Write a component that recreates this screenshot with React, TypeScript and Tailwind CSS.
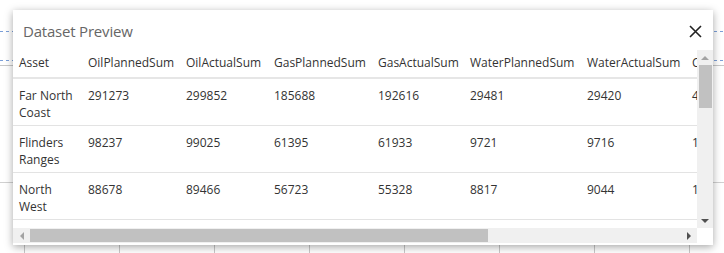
import React from "react";

const columns = [
  { key: "asset", label: "Asset", w: "w-[69px]" },
  { key: "oilP", label: "OilPlannedSum", w: "w-[98px]" },
  { key: "oilA", label: "OilActualSum", w: "w-[88px]" },
  { key: "gasP", label: "GasPlannedSum", w: "w-[104px]" },
  { key: "gasA", label: "GasActualSum", w: "w-[92px]" },
  { key: "watP", label: "WaterPlannedSum", w: "w-[117px]" },
  { key: "watA", label: "WaterActualSum", w: "w-[105px]" },
  { key: "condP", label: "CondensatePlannedSum", w: "w-[150px]" },
];

const rows = [
  ["Far North Coast", "291273", "299852", "185688", "192616", "29481", "29420", "41230"],
  ["Flinders Ranges", "98237", "99025", "61395", "61933", "9721", "9716", "13655"],
  ["North West", "88678", "89466", "56723", "55328", "8817", "9044", "12480"],
  ["South East", "77120", "76534", "48210", "47980", "7654", "7702", "10922"],
];

const gridX = [24, 119, 214, 309, 404, 499, 594, 689];

const App = () => {
  return (
    <div className="relative w-[724px] h-[253px] bg-white overflow-hidden font-['Open_Sans','Noto_Sans',sans-serif]">
      {/* chart behind the dialog */}
      <svg className="absolute inset-0" width="724" height="253">
        <line x1="0" y1="31.5" x2="724" y2="31.5" stroke="#7b9fd8" strokeDasharray="3 3" />
        <line x1="0" y1="60.5" x2="724" y2="60.5" stroke="#7b9fd8" strokeDasharray="3 3" />
        <line x1="0" y1="65.5" x2="724" y2="65.5" stroke="#c8c8c8" />
        <line x1="0" y1="182.5" x2="724" y2="182.5" stroke="#d0d0d0" />
        {gridX.map((x) => (
          <line key={x} x1={x + 0.5} y1="240" x2={x + 0.5} y2="253" stroke="#c8c8c8" />
        ))}
      </svg>

      {/* dialog */}
      <div className="absolute left-[13px] top-[10px] w-[700px] h-[235px] bg-white shadow-[0_2px_8px_rgba(0,0,0,0.35)] flex flex-col">
        <div className="h-[38px] flex items-center justify-between pl-[10px] pr-[11px] pt-[4px]">
          <span className="text-[15px] text-[#666666] tracking-[-0.2px]">Dataset Preview</span>
          <svg width="13" height="13" viewBox="0 0 13 13">
            <path d="M1 1 L12 12 M12 1 L1 12" stroke="#222" strokeWidth="1.6" />
          </svg>
        </div>

        <div className="flex flex-1">
          <div className="flex flex-col w-[684px]">
            <div className="h-[180px] overflow-hidden text-[12px] text-[#333333]">
              <div className="flex h-[31px] border-b-2 border-[#e6e6e6] w-max">
                {columns.map((c) => (
                  <div key={c.key} className={`${c.w} shrink-0 px-[6px] flex items-center whitespace-nowrap`}>
                    {c.label}
                  </div>
                ))}
              </div>
              {rows.map((r, i) => (
                <div key={i} className="flex h-[47px] border-b border-[#e3e3e3] w-max">
                  {r.map((v, j) => (
                    <div key={j} className={`${columns[j].w} shrink-0 px-[6px] pt-[8px] leading-[17px]`}>
                      {v}
                    </div>
                  ))}
                </div>
              ))}
            </div>
            {/* horizontal scrollbar */}
            <div className="h-[15px] bg-[#f0f0f0] flex items-center">
              <div className="w-[17px] flex justify-center">
                <div className="w-0 h-0 border-y-[4px] border-y-transparent border-r-[4px] border-r-[#a3a3a3]" />
              </div>
              <div className="w-[458px] h-[13px] bg-[#c1c1c1]" />
              <div className="flex-1" />
              <div className="w-[17px] flex justify-center">
                <div className="w-0 h-0 border-y-[4px] border-y-transparent border-l-[4px] border-l-[#505050]" />
              </div>
            </div>
          </div>
          {/* vertical scrollbar */}
          <div className="w-[16px] flex flex-col pt-[2px]">
            <div className="h-[178px] bg-[#f0f0f0] flex flex-col items-center">
              <div className="h-[15px] flex items-center">
                <div className="w-0 h-0 border-x-[4px] border-x-transparent border-b-[4px] border-b-[#a3a3a3]" />
              </div>
              <div className="w-[13px] h-[43px] bg-[#c1c1c1]" />
              <div className="flex-1" />
              <div className="h-[15px] flex items-center">
                <div className="w-0 h-0 border-x-[4px] border-x-transparent border-t-[4px] border-t-[#505050]" />
              </div>
            </div>
            <div className="flex-1 bg-white" />
          </div>
        </div>
      </div>
    </div>
  );
};

export default App;
